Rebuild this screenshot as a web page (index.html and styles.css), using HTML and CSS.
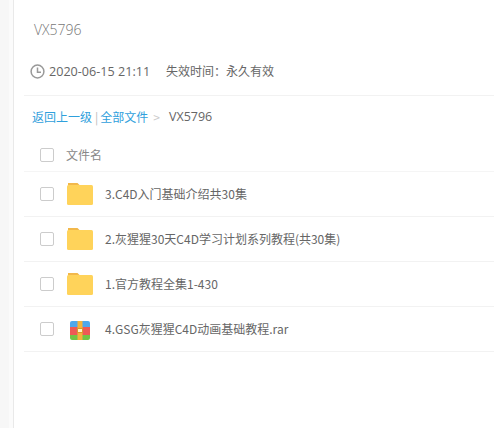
FILE: index.html
```html
<!DOCTYPE html>
<html lang="zh-CN">

<head>
    <meta charset="UTF-8">
    <title>VX5796</title>
    <link rel="stylesheet" href="styles.css">
</head>

<body>
    <div class="main">
        <h2 class="title">VX5796</h2>
        <div class="meta">
            <svg class="clock" width="15" height="15" viewBox="0 0 15 15">
                <circle cx="7.5" cy="7.5" r="6.4" fill="none" stroke="#999" stroke-width="1.5" />
                <path d="M7.5 3.6V8.2H11" fill="none" stroke="#999" stroke-width="1.5" />
            </svg>
            <span class="date">2020-06-15 21:11</span>
            <span class="expire">失效时间：永久有效</span>
        </div>
        <div class="crumbs">
            <a>返回上一级</a><span class="sep">|</span><a>全部文件</a><span class="gt">&gt;</span><span class="latin">VX5796</span>
        </div>
        <div class="list-head">
            <span class="check"></span>
            <span class="head-name">文件名</span>
        </div>
        <ul class="files">
            <li>
                <span class="check"></span>
                <svg class="icon" width="26" height="22" viewBox="0 0 26 22">
                    <path d="M1 0H10.5L13 2.5H1Z" fill="#f2b84b" />
                    <rect y="2" width="26" height="20" rx="1.5" fill="#ffd35a" />
                </svg>
                <span class="name">3.C4D入门基础介绍共30集</span>
            </li>
            <li>
                <span class="check"></span>
                <svg class="icon" width="26" height="22" viewBox="0 0 26 22">
                    <path d="M1 0H10.5L13 2.5H1Z" fill="#f2b84b" />
                    <rect y="2" width="26" height="20" rx="1.5" fill="#ffd35a" />
                </svg>
                <span class="name">2.灰猩猩30天C4D学习计划系列教程(共30集)</span>
            </li>
            <li>
                <span class="check"></span>
                <svg class="icon" width="26" height="22" viewBox="0 0 26 22">
                    <path d="M1 0H10.5L13 2.5H1Z" fill="#f2b84b" />
                    <rect y="2" width="26" height="20" rx="1.5" fill="#ffd35a" />
                </svg>
                <span class="name">1.官方教程全集1-430</span>
            </li>
            <li>
                <span class="check"></span>
                <svg class="icon rar" width="20" height="19" viewBox="0 0 20 19">
                    <path d="M2 0H18A2 2 0 0 1 20 2V6H0V2A2 2 0 0 1 2 0Z" fill="#4fa8ec" />
                    <rect y="6" width="20" height="8" fill="#ee5a55" />
                    <path d="M0 14H20V17A2 2 0 0 1 18 19H2A2 2 0 0 1 0 17Z" fill="#72c545" />
                    <rect x="7.5" width="5" height="19" fill="#f5b43c" />
                    <rect x="7.5" y="7.5" width="5" height="4" fill="#fff3c8" stroke="#d99a2b" />
                </svg>
                <span class="name">4.GSG灰猩猩C4D动画基础教程.rar</span>
            </li>
        </ul>
    </div>
</body>

</html>
```

FILE: styles.css
```css
html,
body {
    height: 100%;
}

body {
    margin: 0;
    background-color: #f7f7f7;
    font-family: "Noto Sans CJK SC", "Open Sans", sans-serif;
    font-size: 12px;
    color: #666;
}

.main {
    box-sizing: border-box;
    height: 100%;
    margin-left: 13px;
    padding-left: 10px;
    border-left: 1px solid #e9e9e9;
    box-shadow: -4px 0 0 #fbfbfb;
    background-color: white;
    overflow: hidden;
}

.title {
    margin: 0;
    padding: 20px 0 0 10px;
    height: 33px;
    font-family: "Open Sans", sans-serif;
    font-size: 14px;
    font-weight: 300;
    line-height: 20px;
    color: #777;
}

.meta {
    display: flex;
    align-items: center;
    height: 36px;
    padding-left: 6px;
    padding-bottom: 6px;
    border-bottom: 1px solid #f2f2f2;
}

.clock {
    margin-right: 4px;
}

.date {
    width: 117px;
    font-family: "Open Sans", sans-serif;
    font-size: 12.6px;
}

.expire {
    margin-bottom: 2px;
}

.crumbs {
    display: flex;
    align-items: center;
    height: 40px;
    padding-left: 8px;
    color: #666;
}

.crumbs a {
    color: #2fa0dc;
}

.sep {
    margin: 0 2px 0 3px;
    color: #bbb;
}

.gt {
    margin: 0 9px 0 5px;
    color: #ccc;
}

.latin {
    font-family: "Open Sans", sans-serif;
    font-size: 12.5px;
}

.list-head {
    display: flex;
    align-items: center;
    height: 33px;
    padding-top: 2px;
    padding-left: 16px;
    border-bottom: 1px solid #f5f5f5;
}

.head-name {
    margin-left: 12px;
    color: #888;
}

.check {
    flex: none;
    box-sizing: border-box;
    width: 14px;
    height: 14px;
    border: 1px solid #ccc;
    border-radius: 2px;
    background-color: white;
}

.files {
    margin: 0;
    padding: 0;
    list-style: none;
}

.files li {
    display: flex;
    align-items: center;
    height: 44px;
    padding-left: 16px;
    border-bottom: 1px solid #f2f2f2;
}

.icon {
    flex: none;
    margin: 0 12px 0 13px;
}

.icon.rar {
    margin: 2px 15px 0 16px;
}

.name {
    margin-bottom: 2px;
    color: #666;
}
```
